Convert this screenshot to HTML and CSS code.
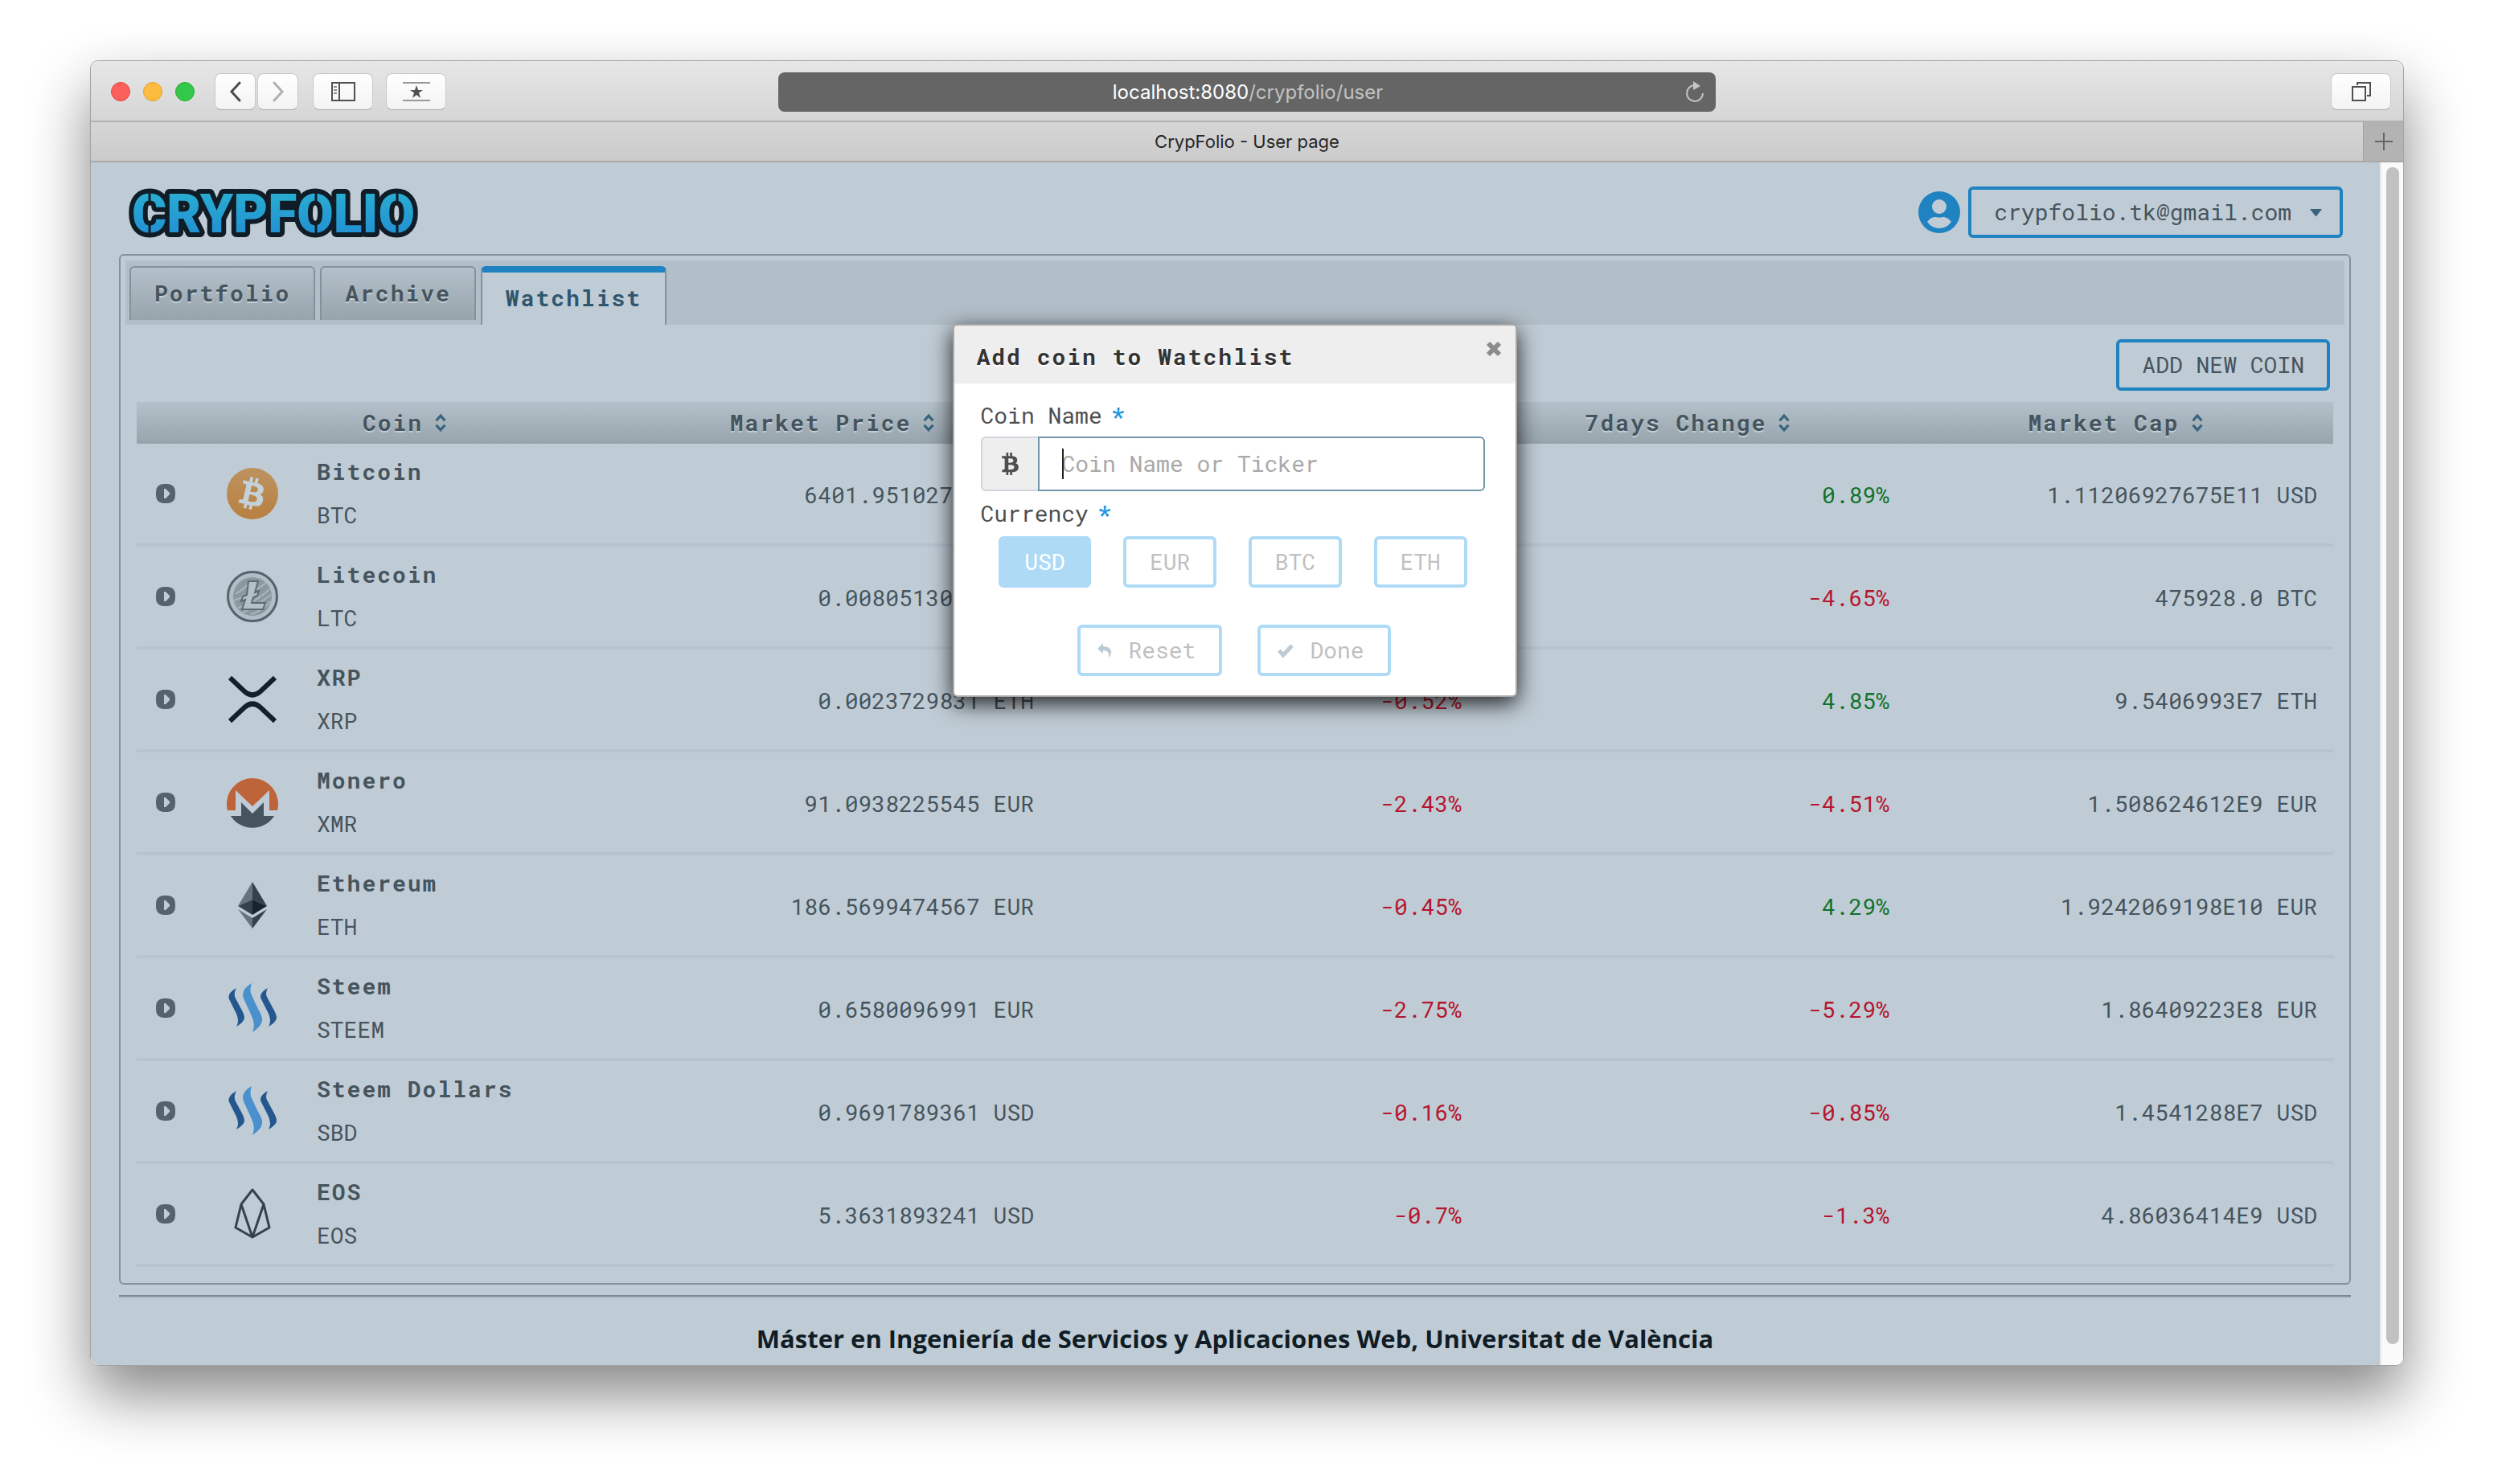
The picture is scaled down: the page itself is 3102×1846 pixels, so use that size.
FILE: index.html
```html
<!DOCTYPE html>
<html lang="es">
<head>
<meta charset="utf-8">
<title>CrypFolio - User page</title>
<link rel="stylesheet" href="styles.css">
</head>
<body>
<svg width="0" height="0" class="sprites" aria-hidden="true">
  <defs>
    <symbol id="sort" viewBox="0 0 14 22"><path d="M2 8.500 7 3l5 5.500M2 13.500 7 19l5-5.500" fill="none" stroke="currentColor" stroke-width="3"/></symbol>
    <symbol id="expand" viewBox="0 0 26 26"><path fill-rule="evenodd" d="M10 1h6q9 1 9 10v4q0 9-9 10h-6q-9-1-9-10v-4q0-9 9-10zM11 7v12h2l5-5v-2l-5-5z" fill="currentColor"/></symbol>
    <symbol id="btc" viewBox="0 0 384 512"><path fill="currentColor" d="M310.204 242.638c27.73-14.18 45.377-39.39 41.28-81.3-5.358-57.351-52.458-76.573-114.85-81.929V0h-48.528v77.203c-12.605 0-25.525.315-38.444.63V0h-48.53v79.409c-17.842.539-38.622.276-97.37 0v51.678c38.314-.678 58.417-3.14 63.023 21.427v217.429c-2.925 19.492-18.524 16.685-53.255 16.071L3.765 443.68c88.481 0 97.37.315 97.37.315V512h48.53v-67.06c13.234.315 26.154.315 38.444.315V512h48.528v-68.005c81.299-4.412 135.647-24.894 142.895-101.467 5.671-61.446-23.32-88.862-69.326-99.89zM150.608 134.553c27.415 0 113.126-8.507 113.126 48.528 0 54.515-85.71 48.212-113.126 48.212v-96.74zm0 251.776V279.821c32.772 0 133.127-9.138 133.127 53.255-.001 60.186-100.355 53.253-133.127 53.253z"/></symbol>
    <symbol id="steem" viewBox="0 0 64 64">
      <path d="M12 7Q0 14 3 21L12 39Q16 48 12 55Q22 49 22 44Q22 40 18 33L11 20Q8 14 12 7z" fill="#24578f"/>
      <path d="M31 1Q17 9 21 20L31 42Q36 53 32 62Q44 54 44 47Q45 43 39 33L31 16Q28 10 31 1z" fill="#4990cc"/>
      <path d="M51 7Q39 14 43 21L52 39Q56 48 52 55Q62 49 62 44Q62 40 58 33L51 20Q47 14 51 7z" fill="#24578f"/>
    </symbol>
    <linearGradient id="logoFill" x1="0" y1="0" x2="0" y2="1"><stop offset="0" stop-color="#2ab3d2"/><stop offset="1" stop-color="#2189d3"/></linearGradient>
    <linearGradient id="btcFill" x1="0" y1="0" x2="0" y2="1"><stop offset="0" stop-color="#bd9260"/><stop offset="1" stop-color="#b98040"/></linearGradient>
  </defs>
</svg>

<div class="window">
  <div class="toolbar">
    <div class="toolbar-side">
      <div class="lights"><i class="light red"></i><i class="light amber"></i><i class="light green"></i></div>
      <div class="nav-pair">
        <button class="tool narrow" aria-label="Back"><svg width="16" height="26" viewBox="0 0 16 26"><path d="M13 2 3 13l10 11" fill="none" stroke="#4c4c4c" stroke-width="3" stroke-linecap="round"/></svg></button>
        <button class="tool narrow" aria-label="Forward"><svg width="16" height="26" viewBox="0 0 16 26"><path d="m3 2 10 11L3 24" fill="none" stroke="#b0b0b0" stroke-width="3" stroke-linecap="round"/></svg></button>
      </div>
      <button class="tool" aria-label="Sidebar"><svg width="30" height="24" viewBox="0 0 30 24"><path d="M1 1h28v22H1zM10 1v22" fill="none" stroke="#505050" stroke-width="2"/><path d="M3 6h4M3 10h4M3 14h4" stroke="#8a8a8a" stroke-width="2"/></svg></button>
      <button class="tool" aria-label="Top sites"><svg width="36" height="26" viewBox="0 0 36 26"><path d="M1 2h34M1 24h34" stroke="#999" stroke-width="2"/><path d="m18 5 2 6h6l-5 3.500 2 6.500-5-4-5 4 2-6.500L10 11h6z" fill="#505050"/></svg></button>
    </div>
    <div class="address">
      <span class="address-text">localhost:8080<span class="path">/crypfolio/user</span></span>
      <button class="reload" aria-label="Reload"><svg width="24" height="28" viewBox="0 0 24 28"><path d="M11 5A10 10 0 1 0 22 15" fill="none" stroke="#c6c6c6" stroke-width="2"/><path d="m10 0 9 6-9 5z" fill="#c6c6c6"/></svg></button>
    </div>
    <div class="toolbar-side end">
      <button class="tool" aria-label="Show tabs"><svg width="24" height="26" viewBox="0 0 24 26"><path d="M1 7h16v17H1zM7 5V2h16v16h-4" fill="none" stroke="#505050" stroke-width="2"/></svg></button>
    </div>
  </div>
  <div class="tabbar">
    <span class="tab-title">CrypFolio - User page</span>
    <button class="new-tab" aria-label="New tab"><svg width="22" height="22" viewBox="0 0 22 22"><path d="M11 0v22M0 11h22" stroke="#666" stroke-width="2"/></svg></button>
  </div>

  <div class="viewport">
    <div class="page">
      <header class="page-head">
        <svg class="logo" width="372" height="64" viewBox="0 0 372 64" role="img" aria-label="Crypfolio">
          <text class="logo-text" x="187" y="57" text-anchor="middle">CRYPFOLIO</text>
          <path d="M33 8v14M33 45v14M240 8v14M240 45v14M341 8v14M341 45v14" stroke="#101c26" stroke-width="3"/>
        </svg>
        <div class="user">
          <svg width="52" height="52" viewBox="0 0 52 52"><circle cx="26" cy="26" r="26" fill="#1f83c1"/><circle cx="26" cy="19" r="9" fill="#c0ccd5"/><path d="M11 38q5-7 11-6 4 1 8 0 6-1 11 6-6 8-15 8t-15-8z" fill="#c0ccd5"/></svg>
          <button class="btn user-btn">crypfolio.tk@gmail.com<svg width="15" height="9" viewBox="0 0 15 9"><path d="M0 0h15L8 9H7z" fill="#39647e"/></svg></button>
        </div>
      </header>

      <main class="panel">
        <nav class="tabs">
          <a class="tab" href="#portfolio">Portfolio</a>
          <a class="tab" href="#archive">Archive</a>
          <a class="tab active" href="#watchlist">Watchlist</a>
        </nav>
        <div class="content">
          <div class="actions"><button class="btn">ADD NEW COIN</button></div>
          <table class="coins">
            <colgroup><col class="col-expand"><col><col><col><col><col></colgroup>
            <thead>
              <tr>
                <th></th>
                <th><button class="sort">Coin<svg><use href="#sort"/></svg></button></th>
                <th><button class="sort">Market Price<svg><use href="#sort"/></svg></button></th>
                <th><button class="sort">24h Change<svg><use href="#sort"/></svg></button></th>
                <th><button class="sort">7days Change<svg><use href="#sort"/></svg></button></th>
                <th><button class="sort">Market Cap<svg><use href="#sort"/></svg></button></th>
              </tr>
            </thead>
            <tbody>
              <tr>
                <td><button class="expand" aria-label="Expand"><svg><use href="#expand"/></svg></button></td>
                <td><div class="coin"><svg viewBox="0 0 64 64"><circle cx="32" cy="32" r="32" fill="url(#btcFill)"/><g transform="rotate(13 32 32)" color="#c5d1d9"><use href="#btc" x="17" y="12" width="30" height="40"/></g></svg><div><strong>Bitcoin</strong><span>BTC</span></div></div></td>
                <td>6401.95102753 USD</td><td class="down">-0.32%</td><td class="up">0.89%</td><td>1.11206927675E11 USD</td>
              </tr>
              <tr>
                <td><button class="expand" aria-label="Expand"><svg><use href="#expand"/></svg></button></td>
                <td><div class="coin"><svg viewBox="0 0 64 64"><circle cx="32" cy="32" r="30.500" fill="#b2bec7" stroke="#56636c" stroke-width="3"/><circle cx="32" cy="32" r="24" fill="#8b98a0"/><path d="M11 29q10-6 21-17M9 37q20-7 40-22M20 52q12-6 35-22M14 46q18-4 39-23M30 54q10-2 25-16" stroke="#aab6be" stroke-width="2" fill="none"/><path d="M27 13h12l-4 14 5-2-2 6-5 2-2 7h17l-3 8H19l4-12-5 2 2-6 5-2z" fill="#b5c1c9" stroke="#5d6a73" stroke-width="2"/></svg><div><strong>Litecoin</strong><span>LTC</span></div></div></td>
                <td>0.0080513018 BTC</td><td class="down">-1.18%</td><td class="down">-4.65%</td><td>475928.0 BTC</td>
              </tr>
              <tr>
                <td><button class="expand" aria-label="Expand"><svg><use href="#expand"/></svg></button></td>
                <td><div class="coin"><svg viewBox="0 0 64 64"><path d="M4 5 22 22q10 9 20 0L60 5M4 59l18-17q10-9 20 0l18 17" fill="none" stroke="#13202a" stroke-width="6"/></svg><div><strong>XRP</strong><span>XRP</span></div></div></td>
                <td>0.0023729831 ETH</td><td class="down">-0.52%</td><td class="up">4.85%</td><td>9.5406993E7 ETH</td>
              </tr>
              <tr>
                <td><button class="expand" aria-label="Expand"><svg><use href="#expand"/></svg></button></td>
                <td><div class="coin"><svg viewBox="0 0 64 64"><path d="M1 42a32 32 0 1 1 62 0H53V17L32 37 11 17v25z" fill="#be643a"/><path d="M5 49h13V32l14 14 14-14v17h13a32 32 0 0 1-54 0z" fill="#46545d"/></svg><div><strong>Monero</strong><span>XMR</span></div></div></td>
                <td>91.0938225545 EUR</td><td class="down">-2.43%</td><td class="down">-4.51%</td><td>1.508624612E9 EUR</td>
              </tr>
              <tr>
                <td><button class="expand" aria-label="Expand"><svg><use href="#expand"/></svg></button></td>
                <td><div class="coin"><svg viewBox="0 0 64 64"><path d="M32 3 14 33l18-8z" fill="#66757d"/><path d="m32 3 18 30-18-8z" fill="#34434b"/><path d="M14 33l18-8v19z" fill="#34434b"/><path d="m50 33-18-8v19z" fill="#17242d"/><path d="m14 37 18 11v13z" fill="#66757d"/><path d="M50 37 32 48v13z" fill="#34434b"/></svg><div><strong>Ethereum</strong><span>ETH</span></div></div></td>
                <td>186.5699474567 EUR</td><td class="down">-0.45%</td><td class="up">4.29%</td><td>1.9242069198E10 EUR</td>
              </tr>
              <tr>
                <td><button class="expand" aria-label="Expand"><svg><use href="#expand"/></svg></button></td>
                <td><div class="coin"><svg><use href="#steem"/></svg><div><strong>Steem</strong><span>STEEM</span></div></div></td>
                <td>0.6580096991 EUR</td><td class="down">-2.75%</td><td class="down">-5.29%</td><td>1.86409223E8 EUR</td>
              </tr>
              <tr>
                <td><button class="expand" aria-label="Expand"><svg><use href="#expand"/></svg></button></td>
                <td><div class="coin"><svg><use href="#steem"/></svg><div><strong>Steem Dollars</strong><span>SBD</span></div></div></td>
                <td>0.9691789361 USD</td><td class="down">-0.16%</td><td class="down">-0.85%</td><td>1.4541288E7 USD</td>
              </tr>
              <tr>
                <td><button class="expand" aria-label="Expand"><svg><use href="#expand"/></svg></button></td>
                <td><div class="coin"><svg viewBox="0 0 64 64"><path d="M32 2 18 20l-7 29 21 12 21-12-7-29zM18 20l14 41 14-41" fill="none" stroke="#34434b" stroke-width="3" stroke-linejoin="round"/></svg><div><strong>EOS</strong><span>EOS</span></div></div></td>
                <td>5.3631893241 USD</td><td class="down">-0.7%</td><td class="down">-1.3%</td><td>4.86036414E9 USD</td>
              </tr>
            </tbody>
          </table>
        </div>
      </main>
      <footer class="foot">Máster en Ingeniería de Servicios y Aplicaciones Web, Universitat de València</footer>

      <form class="dialog" role="dialog" aria-labelledby="dialog-title">
        <div class="dialog-head">
          <h2 id="dialog-title">Add coin to Watchlist</h2>
          <button type="button" class="close" aria-label="Close"><svg width="20" height="20" viewBox="0 0 20 20"><path d="m3 3 14 14M17 3 3 17" stroke="#8c8c8c" stroke-width="6"/></svg></button>
        </div>
        <div class="dialog-body">
          <label class="label" for="coin">Coin Name<b>*</b></label>
          <div class="field">
            <span class="addon"><svg width="21" height="28"><use href="#btc"/></svg></span>
            <input id="coin" type="text" placeholder="Coin Name or Ticker">
          </div>
          <div class="label" id="currency">Currency<b>*</b></div>
          <div class="currencies" role="group" aria-labelledby="currency">
            <button type="button" class="btn soft chosen">USD</button>
            <button type="button" class="btn soft">EUR</button>
            <button type="button" class="btn soft">BTC</button>
            <button type="button" class="btn soft">ETH</button>
          </div>
          <div class="submit">
            <button type="reset" class="btn soft with-icon"><svg width="18" height="18" viewBox="0 0 18 18"><path d="M7 0v4q10 0 10 8 0 3-3 6 2-9-7-9v4L0 7z" fill="#bccad3"/></svg>Reset</button>
            <button type="button" class="btn soft with-icon"><svg width="20" height="18" viewBox="0 0 20 18"><path d="m2 9 5 6L18 3" fill="none" stroke="#bccad3" stroke-width="5"/></svg>Done</button>
          </div>
        </div>
      </form>
    </div>
    <div class="scrollbar"><div class="thumb"></div></div>
  </div>
</div>
</body>
</html>
```
FILE: styles.css
```css
* { box-sizing: border-box; }

body {
  margin: 0;
  padding: 75px 112px 147px;
  background: #fff;
  color: #46545d;
  font: 28px/40px "Roboto Mono", "DejaVu Sans Mono", monospace;
}

button, input {
  margin: 0;
  padding: 0;
  border: 0;
  background: none;
  color: inherit;
  font: inherit;
}

.sprites { position: absolute; }
svg { display: block; flex: none; }

/* Browser window */
.window {
  border: 1px solid #a3a3a3;
  border-radius: 10px;
  box-shadow: 0 36px 76px rgba(0, 0, 0, .48);
}

.toolbar {
  display: flex;
  align-items: center;
  height: 76px;
  padding: 2px 15px 0;
  border-bottom: 2px solid #b1b1b1;
  border-radius: 10px 10px 0 0;
  background: linear-gradient(#e7e7e7, #d5d5d5);
}
.toolbar-side { display: flex; flex: 1; align-items: center; gap: 16px; }
.toolbar-side.end { justify-content: flex-end; }
.lights { display: flex; gap: 16px; margin: 0 9px 0 10px; }
.light { width: 24px; height: 24px; border: 1px solid; border-radius: 50%; }
.red { border-color: #e2463f; background: #fc605c; }
.amber { border-color: #dfa033; background: #fdbc40; }
.green { border-color: #27aa35; background: #34c84a; }
.nav-pair { display: flex; gap: 2px; margin-right: 2px; }
.tool {
  display: flex;
  align-items: center;
  justify-content: center;
  width: 75px;
  height: 46px;
  border: 1px solid #c9c9c9;
  border-bottom-color: #a9a9a9;
  border-radius: 8px;
  background: linear-gradient(#fff, #f3f3f3);
}
.tool.narrow { width: 51px; }
.address {
  display: flex;
  flex: none;
  align-items: center;
  width: 41%;
  height: 49px;
  padding: 2px 14px 0 0;
  border-radius: 8px;
  background: #656565;
  color: #fff;
  font: 24px/32px Inter, sans-serif;
}
.address-text { flex: 1; padding-left: 40px; text-align: center; }
.path { color: #c2c2c2; }

.tabbar {
  display: flex;
  height: 50px;
  border-bottom: 2px solid #a9a9a9;
  background: linear-gradient(#d6d6d6, #cbcbcb);
  color: #262626;
  font: 22px/48px Inter, sans-serif;
}
.tab-title { flex: 1; padding-left: 50px; text-align: center; }
.new-tab {
  display: flex;
  align-items: center;
  justify-content: center;
  width: 50px;
  border-left: 1px solid #a3a3a3;
  background: #b3b3b3;
}

.viewport { display: flex; }
.page {
  position: relative;
  flex: 1;
  border-radius: 0 0 0 10px;
  background: #c0ccd5;
}
.scrollbar {
  width: 29px;
  padding: 6px 5px 26px 6px;
  border-left: 2px solid #e8e8e8;
  border-radius: 0 0 10px 0;
  background: #fafafa;
}
.thumb { height: 100%; border-radius: 8px; background: #c1c1c1; }

/* Page header */
.page-head {
  display: flex;
  align-items: center;
  justify-content: space-between;
  padding: 30px 46px 20px 40px;
}
.logo { overflow: visible; }
.logo-text {
  fill: url(#logoFill);
  stroke: #101c26;
  stroke-width: 12px;
  stroke-linejoin: round;
  paint-order: stroke;
  font: 900 66px Roboto, sans-serif;
}
.user { display: flex; align-items: center; gap: 10px; }
.btn {
  height: 64px;
  padding: 0 28px;
  border: 4px solid #1f83c1;
  border-radius: 6px;
}
.user-btn { display: flex; align-items: center; gap: 23px; padding: 0 22px 0 28px; }

/* Tabs */
.panel {
  margin: 0 36px 0 35px;
  padding: 6px 6px 20px;
  border: 2px solid #84929b;
  border-radius: 6px;
}
.tabs {
  display: flex;
  align-items: flex-start;
  gap: 6px;
  height: 80px;
  padding: 7px 5px 0;
  background: #b3bfc8;
}
.tab {
  padding: 12px 29px 13px;
  border: 2px solid #84929b;
  border-bottom: 0;
  border-radius: 6px 6px 0 0;
  background: linear-gradient(#b4c1ca, #97a4ac);
  color: #46545d;
  font-weight: bold;
  letter-spacing: 2px;
  text-decoration: none;
  text-shadow: 0 2px 0 #c3d0d9;
}
.tab.active {
  border-top: 8px solid #1f83c1;
  background: #c0ccd5;
  color: #2f566e;
  text-shadow: none;
}

/* Coins table */
.content { padding: 18px 14px 0; }
.actions { display: flex; justify-content: flex-end; padding: 0 4px 14px; }
.coins { width: 100%; border-spacing: 0; table-layout: fixed; }
.col-expand { width: 72px; }
.coins thead tr { background: linear-gradient(#b4c1ca, #97a4ac); }
.coins th { height: 52px; padding: 0 9px 0 0; }
.sort {
  display: flex;
  align-items: center;
  gap: 14px;
  margin: 0 auto;
  font-weight: bold;
  letter-spacing: 2px;
  text-shadow: 0 2px 0 #c3d0d9;
}
.sort svg { width: 16px; height: 24px; color: #39647e; }
.coins td {
  height: 128px;
  padding: 3px 20px 0;
  border-bottom: 4px solid #b6c4d0;
  text-align: right;
}
.coins td:first-child { padding: 0 23px; }
.coins td:nth-child(2) { padding-top: 0; }
.coins .up { color: #10722c; }
.coins .down { color: #b5152f; }
.expand { display: block; }
.expand svg { width: 26px; height: 26px; color: #56636c; }
.coin {
  display: flex;
  align-items: center;
  gap: 48px;
  padding-left: 20px;
  line-height: 54px;
  text-align: left;
}
.coin > svg { width: 64px; height: 64px; }
.coin strong, .coin span { display: block; }
.coin strong { letter-spacing: 2px; }

.foot {
  margin: 13px 36px 0 35px;
  padding: 32px 0 13px;
  border-top: 2px solid #7b8992;
  box-shadow: inset 0 2px 0 #b3bfc8;
  color: #101c26;
  font: bold 31px/40px "Open Sans", sans-serif;
  text-align: center;
}

/* Dialog */
.dialog {
  position: absolute;
  top: 201px;
  left: 50%;
  width: 702px;
  margin-left: -352px;
  border: 2px solid #a8a8a8;
  border-radius: 6px;
  background: #fff;
  box-shadow: 0 8px 28px rgba(0, 0, 0, .85);
}
.dialog-head {
  display: flex;
  align-items: flex-start;
  justify-content: space-between;
  padding: 19px 17px 13px 28px;
  border-radius: 4px 4px 0 0;
  background: #eee;
}
.dialog-head h2 {
  margin: 0;
  color: #333;
  font-size: 28px;
  letter-spacing: 2px;
  text-shadow: 0 2px 0 #fff;
}
.dialog-body { padding: 20px 38px 24px 33px; color: #4f4f4f; }
.label { display: flex; gap: 11px; }
.label b { color: #1b96e3; }
.field {
  position: relative;
  display: flex;
  height: 68px;
  margin: 6px 0 8px;
}
.field::after {
  position: absolute;
  top: 15px;
  left: 101px;
  width: 2px;
  height: 38px;
  background: #222;
  content: "";
}
.addon {
  display: flex;
  align-items: center;
  justify-content: center;
  width: 71px;
  border: 2px solid #d1d5de;
  border-right: 0;
  border-radius: 6px 0 0 6px;
  background: #eee;
}
.field input {
  flex: 1;
  min-width: 0;
  padding: 0 28px;
  border: 2px solid #7396ab;
  border-radius: 0 6px 6px 0;
}
.field input::placeholder { color: #a9a9a9; opacity: 1; }
.currencies {
  display: grid;
  grid-template-columns: repeat(4, 1fr);
  gap: 40px;
  margin: 8px 22px 46px;
}
.soft { border-color: #aedaf6; color: #c0c0c0; }
.currencies .btn { padding: 0; }
.chosen { background: #aedaf6; color: #fff; }
.submit { display: flex; justify-content: center; gap: 44px; padding-left: 4px; }
.with-icon { display: flex; align-items: center; gap: 20px; padding: 0 29px 0 21px; }
```
